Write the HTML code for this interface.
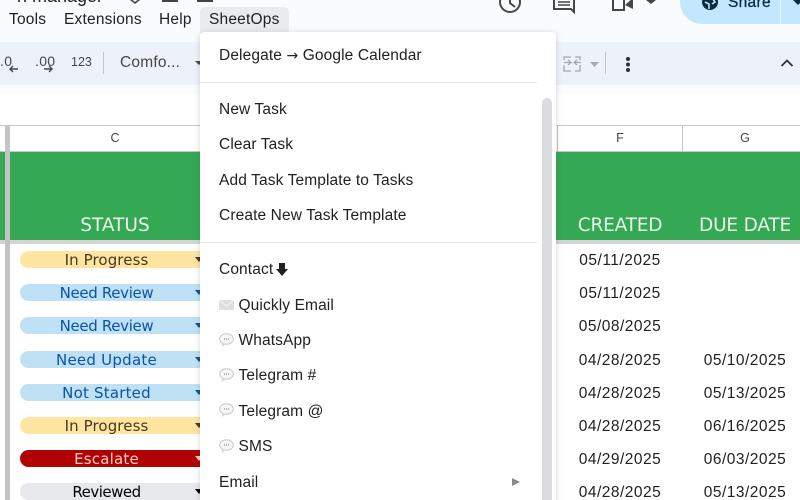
<!DOCTYPE html>
<html><head><meta charset="utf-8">
<style>
html,body{margin:0;padding:0;width:800px;height:500px;overflow:hidden;background:#fff}
#w{position:relative;width:800px;height:500px;overflow:hidden;background:#fff;font-family:"Liberation Sans",sans-serif;color:#202124;filter:blur(.3px)}
.a{position:absolute;white-space:nowrap}
.mb{top:11px;height:18px;line-height:18px;font-size:15.5px;letter-spacing:.2px;color:#202124}
.tb{color:#444746}
.m{position:absolute;left:219px;height:20px;line-height:20px;font-size:15.5px;letter-spacing:.12px;color:#202124;white-space:nowrap}
.pill{position:absolute;left:20px;width:195px;height:17px;border-radius:9px;text-align:center;font-family:"DejaVu Sans",sans-serif;font-size:15px;line-height:18px;text-indent:-22px;overflow:hidden}
.pill i{position:absolute;left:175px;top:6px;width:0;height:0;border-left:4px solid transparent;border-right:4px solid transparent;border-top:5px solid currentColor}
.y{background:#ffe5a0;color:#473821}.b{background:#bfe1f6;color:#0a53a8}.r{background:#b10202;color:#ffcfc9}.g{background:#e6e8eb;color:#000}
.d{position:absolute;width:110px;height:18px;line-height:18px;text-align:center;font-size:15.5px;letter-spacing:.5px;color:#202124}
.h{position:absolute;top:214px;height:24px;line-height:24px;text-align:center;color:#eaf6ec;font-family:"DejaVu Sans",sans-serif;font-size:18.5px}
</style></head>
<body>
<div id="w">
<div class="a" style="left:0;top:0;width:800px;height:93px;background:#f9fbfd"></div>
<div class="a" style="left:0;top:-15px;width:103px;overflow:hidden;font-size:18px;line-height:22px;text-align:right;color:#1f1f1f">n manager</div>
<svg class="a" style="left:129px;top:0" width="12" height="5" fill="none" stroke="#444" stroke-width="1.6"><path d="M1 -1L6 3L11 -1"/></svg>
<div class="a" style="left:162px;top:0;width:16px;height:2px;background:#444"></div>
<div class="a" style="left:197px;top:0;width:16px;height:2px;background:#444"></div>

<div class="a" style="left:200px;top:7px;width:89px;height:26px;background:#e9ebee;border-radius:5px 5px 0 0"></div>
<div class="a mb" style="left:9px">Tools</div>
<div class="a mb" style="left:64px">Extensions</div>
<div class="a mb" style="left:159px">Help</div>
<div class="a mb" style="left:209px">SheetOps</div>

<svg class="a" style="left:490px;top:0" width="180" height="16" viewBox="0 0 180 16" fill="none" stroke="#444746" stroke-width="2">
<circle cx="20" cy="2" r="10"/><path d="M20 -2V3L25 7"/>
<path d="M64 -2V9H81L84 12V-2"/><path d="M68 2H80M68 5H80" stroke-width="1.4"/>
<path d="M123 -2V10H134V-2"/><path d="M135 5L143 9V-2" fill="#444746" stroke="none"/>
<path d="M156 0H166L161 4Z" fill="#444746" stroke="none"/>
</svg>

<div class="a" style="left:680px;top:-20px;width:140px;height:44px;background:#c2e7ff;border-radius:22px"></div>
<div class="a" style="left:780px;top:0;width:1px;height:24px;background:#eef8ff"></div>
<svg class="a" style="left:700px;top:0" width="20" height="14" viewBox="0 0 20 14"><circle cx="10" cy="2" r="8" fill="#0b2a45"/><path d="M5 2L9 4L9 9M12 -2L15 2L12 4" stroke="#c2e7ff" stroke-width="1.6" fill="none"/></svg>
<div class="a" style="left:728px;top:-6px;font-size:15.5px;line-height:18px;letter-spacing:.3px;color:#0b2a45;-webkit-text-stroke:.3px #0b2a45">Share</div>
<div class="a" style="left:793px;top:0;width:0;height:0;border-left:5px solid transparent;border-right:5px solid transparent;border-top:5px solid #0b2a45"></div>

<div class="a" style="left:0;top:42px;width:800px;height:43px;background:#edf2fa"></div>
<div class="a tb" style="left:0;top:53px;font-size:14px;line-height:16px;letter-spacing:.3px">.0</div>
<svg class="a" style="left:8px;top:64px" width="48" height="10" fill="none" stroke="#444746" stroke-width="1.4"><path d="M2 5H10M5 2L2 5L5 8M36 5H44M41 2L44 5L41 8"/></svg>
<div class="a tb" style="left:35px;top:53px;font-size:14px;line-height:16px;letter-spacing:.3px">.00</div>
<div class="a tb" style="left:71px;top:54px;font-size:12.5px;line-height:16px">123</div>
<div class="a" style="left:103px;top:52px;width:1px;height:22px;background:#c7c7c7"></div>
<div class="a tb" style="left:120px;top:54px;font-size:15.5px;line-height:18px;letter-spacing:.2px">Comfo...</div>
<div class="a" style="left:195px;top:61px;width:0;height:0;border-left:4px solid transparent;border-right:4px solid transparent;border-top:4px solid #444746"></div>

<svg class="a" style="left:560px;top:52px" width="70" height="24" fill="none" stroke="#a6a9ac" stroke-width="1.3"><path d="M11 5H4V8M4 13V19H11M4 10.500H10M8 8L11 10.500L8 13M15 5H20V8M20 13V19H15M21 10.500H15M17 8L14 10.500L17 13"/><path d="M30 10H39L34.500 15Z" fill="#a6a9ac" stroke="none"/></svg>
<div class="a" style="left:605px;top:52px;width:1px;height:22px;background:#c7c7c7"></div>
<div class="a" style="left:626px;top:57px;width:4px;height:4px;border-radius:50%;background:#303134;box-shadow:0 5.500px 0 #303134,0 11px 0 #303134"></div>
<svg class="a" style="left:780px;top:58px" width="14" height="10" fill="none" stroke="#303134" stroke-width="1.8"><path d="M1.500 8L7 2.500L12.500 8"/></svg>

<div class="a" style="left:0;top:125px;width:800px;height:1px;background:#c7c7c7"></div>
<div class="a" style="left:0;top:151px;width:800px;height:1px;background:#c7c7c7"></div>
<div class="a" style="left:682px;top:125px;width:1px;height:26px;background:#c7c7c7"></div>
<div class="a" style="left:557px;top:125px;width:1px;height:26px;background:#c7c7c7"></div>
<div class="a" style="left:105px;top:131px;width:20px;text-align:center;font-size:12.5px;line-height:14px;color:#444746">C</div>
<div class="a" style="left:610px;top:131px;width:20px;text-align:center;font-size:12.5px;line-height:14px;color:#444746">F</div>
<div class="a" style="left:735px;top:131px;width:20px;text-align:center;font-size:12.5px;line-height:14px;color:#444746">G</div>

<div class="a" style="left:0;top:152px;width:800px;height:88px;background:#34a853"></div>
<div class="a" style="left:0;top:240px;width:800px;height:4px;background:#d4d4d4"></div>
<div class="a" style="left:5px;top:125px;width:5px;height:375px;background:#c4c4c4"></div>

<div class="h" style="left:60px;width:110px;letter-spacing:0">STATUS</div>
<div class="h" style="left:565px;width:110px;letter-spacing:-.2px">CREATED</div>
<div class="h" style="left:690px;width:110px;letter-spacing:-.2px">DUE DATE</div>

<div class="pill y" style="top:251px;letter-spacing:.1px">In Progress<i></i></div>
<div class="pill b" style="top:284px;letter-spacing:-.35px">Need Review<i></i></div>
<div class="pill b" style="top:317px;letter-spacing:-.35px">Need Review<i></i></div>
<div class="pill b" style="top:351px;letter-spacing:.25px">Need Update<i></i></div>
<div class="pill b" style="top:384px;letter-spacing:.2px">Not Started<i></i></div>
<div class="pill y" style="top:417px;letter-spacing:.1px">In Progress<i></i></div>
<div class="pill r" style="top:450px;letter-spacing:.2px">Escalate<i></i></div>
<div class="pill g" style="top:483px;letter-spacing:-.5px">Reviewed<i></i></div>

<div class="d" style="left:565px;top:252px">05/11/2025</div>
<div class="d" style="left:565px;top:285px">05/11/2025</div>
<div class="d" style="left:565px;top:318px">05/08/2025</div>
<div class="d" style="left:565px;top:352px">04/28/2025</div>
<div class="d" style="left:565px;top:385px">04/28/2025</div>
<div class="d" style="left:565px;top:418px">04/28/2025</div>
<div class="d" style="left:565px;top:451px">04/29/2025</div>
<div class="d" style="left:565px;top:484px">04/28/2025</div>
<div class="d" style="left:690px;top:352px">05/10/2025</div>
<div class="d" style="left:690px;top:385px">05/13/2025</div>
<div class="d" style="left:690px;top:418px">06/16/2025</div>
<div class="d" style="left:690px;top:451px">06/03/2025</div>
<div class="d" style="left:690px;top:484px">05/13/2025</div>

<div class="a" style="left:200px;top:32px;width:356px;height:480px;background:#fff;border-radius:4px;box-shadow:0 1px 6px rgba(60,64,67,.22)"></div>
<div class="a" style="left:200px;top:82px;width:337px;height:1px;background:#e6e7e9"></div>
<div class="a" style="left:200px;top:242px;width:337px;height:1px;background:#e6e7e9"></div>
<div class="a" style="left:542px;top:98px;width:10px;height:410px;border-radius:5px;background:#dadce0"></div>

<div class="m" style="top:46px">Delegate <span style="font-family:'DejaVu Sans',sans-serif;font-size:14px">→</span> Google Calendar</div>
<div class="m" style="top:100px">New Task</div>
<div class="m" style="top:135px">Clear Task</div>
<div class="m" style="top:171px">Add Task Template to Tasks</div>
<div class="m" style="top:206px">Create New Task Template</div>
<div class="m" style="top:260px">Contact</div>
<svg class="a" style="left:275px;top:262px" width="14" height="15"><path d="M4 1H10V7H13L7 14L1 7H4Z" fill="#202124"/></svg>

<svg class="a" style="left:219px;top:299px" width="15" height="12"><rect x="0" y="1" width="15" height="10" fill="#dfdfdf"/><path d="M0 1L7.500 7L15 1" fill="none" stroke="#f4f4f4" stroke-width="1"/></svg>
<div class="m" style="top:296px;left:238.500px">Quickly Email</div>

<svg class="a" style="left:219px;top:333px" width="15" height="15"><ellipse cx="7.500" cy="6" rx="6.800" ry="5.300" fill="#f6f6f6" stroke="#c8c8c8"/><path d="M3 10L3 14L7 11Z" fill="#d8d8d8"/><path d="M5 6h1M7 6h1M9 6h1" stroke="#777"/></svg>
<div class="m" style="top:331px;left:238.500px">WhatsApp</div>

<svg class="a" style="left:219px;top:368px" width="15" height="15"><ellipse cx="7.500" cy="6" rx="6.800" ry="5.300" fill="#f6f6f6" stroke="#c8c8c8"/><path d="M3 10L3 14L7 11Z" fill="#d8d8d8"/><path d="M5 6h1M7 6h1M9 6h1" stroke="#777"/></svg>
<div class="m" style="top:366px;left:238.500px">Telegram #</div>

<svg class="a" style="left:219px;top:403px" width="15" height="15"><ellipse cx="7.500" cy="6" rx="6.800" ry="5.300" fill="#f6f6f6" stroke="#c8c8c8"/><path d="M3 10L3 14L7 11Z" fill="#d8d8d8"/><path d="M5 6h1M7 6h1M9 6h1" stroke="#777"/></svg>
<div class="m" style="top:402px;left:238.500px">Telegram @</div>

<svg class="a" style="left:219px;top:439px" width="15" height="15"><ellipse cx="7.500" cy="6" rx="6.800" ry="5.300" fill="#f6f6f6" stroke="#c8c8c8"/><path d="M3 10L3 14L7 11Z" fill="#d8d8d8"/><path d="M5 6h1M7 6h1M9 6h1" stroke="#777"/></svg>
<div class="m" style="top:437px;left:238.500px">SMS</div>

<div class="m" style="top:473px">Email</div>
<div class="a" style="left:512px;top:478px;width:0;height:0;border-top:4px solid transparent;border-bottom:4px solid transparent;border-left:8px solid #8a8a8a"></div>
</div>
</body></html>
